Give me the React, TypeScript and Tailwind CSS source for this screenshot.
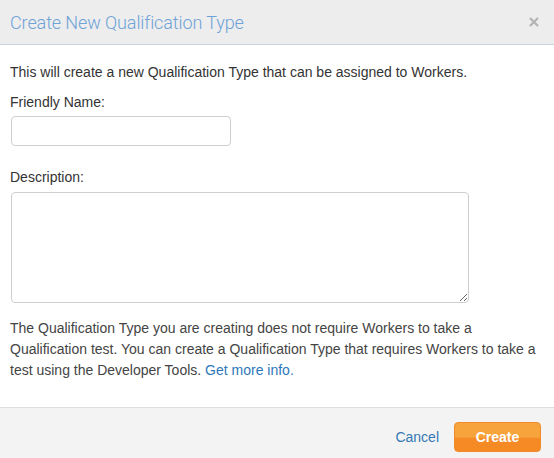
import { useState } from "react";

/** Modal — "Create New Qualification Type" */
export default function App() {
  const [name, setName] = useState("");
  const [description, setDescription] = useState("");

  return (
    <div className="w-[554px] h-[458px] bg-white flex flex-col font-['Liberation_Sans',Arial,sans-serif] text-[14px] text-[#333]">
      <header className="h-[45px] shrink-0 flex items-center justify-between pl-[10px] pr-[15px] bg-[#ededed] border-b border-[#c9d6e2]">
        <h1 className="font-['Roboto',sans-serif] font-light text-[18px] text-[#6ea2d8] tracking-[-0.1px]">
          Create New Qualification Type
        </h1>
        <button type="button" aria-label="Close" className="text-[#b3b3b3]">
          <svg width="10" height="10" viewBox="0 0 10 10" aria-hidden="true">
            <path d="M1 1 L9 9 M9 1 L1 9" stroke="currentColor" strokeWidth="2.2" />
          </svg>
        </button>
      </header>

      <div className="flex-1 px-[10px] pt-[17px]">
        <p className="leading-[20px]">
          This will create a new Qualification Type that can be assigned to Workers.
        </p>

        <label className="block mt-[10px] leading-[20px]" htmlFor="friendly-name">
          Friendly Name:
        </label>
        <input
          id="friendly-name"
          value={name}
          onChange={(e) => setName(e.target.value)}
          className="mt-[4px] ml-px block w-[220px] h-[30px] rounded-[4px] border border-[#cfcfcf] px-2 outline-none"
        />

        <label className="block mt-[21px] leading-[20px]" htmlFor="description">
          Description:
        </label>
        <textarea
          id="description"
          value={description}
          onChange={(e) => setDescription(e.target.value)}
          className="mt-[5px] ml-px block w-[458px] h-[111px] rounded-[4px] border border-[#cfcfcf] px-2 py-1 outline-none"
        />

        <p className="mt-[15px] leading-[21px] text-[#444] whitespace-nowrap">
          The Qualification Type you are creating does not require Workers to take a
          <br />
          Qualification test. You can create a Qualification Type that requires Workers to take a
          <br />
          test using the Developer Tools.{" "}
          <a href="#" className="text-[#2e78b8]">
            Get more info.
          </a>
        </p>
      </div>

      <footer className="h-[51px] shrink-0 border-t border-[#dedede] bg-[#f3f3f3] flex items-start justify-end gap-[15px] pr-[13px] pt-[14px]">
        <a href="#" className="text-[#3378b6] leading-[30px]">
          Cancel
        </a>
        <button
          type="button"
          className="w-[87px] h-[30px] rounded-[4px] border border-[#f08a2a] bg-[linear-gradient(#f8a43c_0%,#f8a43c_50%,#f68b26_55%,#f58a24_100%)] text-white font-bold"
        >
          Create
        </button>
      </footer>
    </div>
  );
}
